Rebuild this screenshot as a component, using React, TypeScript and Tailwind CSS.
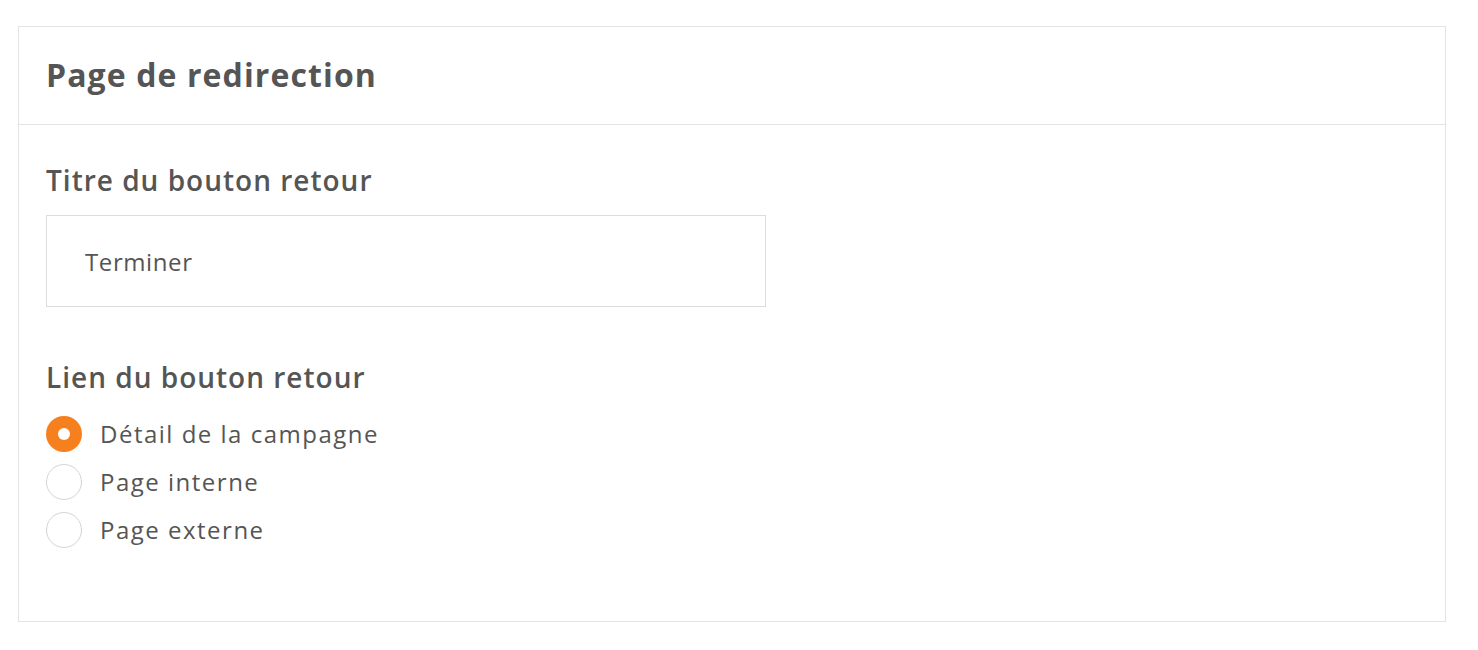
import { useState } from 'react'

const options = ['Détail de la campagne', 'Page interne', 'Page externe']

export default function App() {
  const [title, setTitle] = useState('Terminer')
  const [link, setLink] = useState(options[0])

  return (
    <div className="min-h-screen bg-white pt-[26px] px-[18px] text-[#555555]" style={{ fontFamily: '"Open Sans", Lato, sans-serif' }}>
      <div className="w-[1428px] border border-[#e3e3e3] bg-white">
        {/* Header */}
        <div className="h-[98px] border-b border-[#e3e3e3] px-[27px] flex items-center">
          <h2 className="text-[32px] font-bold leading-none pb-[2px] tracking-[1.1px]">Page de redirection</h2>
        </div>

        {/* Body */}
        <div className="px-[27px] pt-[41px] pb-[73px]">
          <label className="block text-[28px] font-semibold leading-none mb-[21px] tracking-[1px]">Titre du bouton retour</label>
          <input
            value={title}
            onChange={(e) => setTitle(e.target.value)}
            className="w-[720px] h-[92px] border border-[#dcdcdc] px-[38px] text-[24px] text-[#555555] outline-none tracking-[0.6px]"
          />

          <div className="text-[28px] font-semibold leading-none mt-[56px] mb-[25px] tracking-[1px]">Lien du bouton retour</div>
          <div className="flex flex-col gap-[12px]">
            {options.map((o) => {
              const checked = link === o
              return (
                <button key={o} onClick={() => setLink(o)} className="flex items-center gap-[18px] text-left">
                  <span
                    className={`w-[36px] h-[36px] rounded-full flex items-center justify-center ${
                      checked ? 'bg-[#f7801e]' : 'border border-[#d4d4d4] bg-white'
                    }`}
                  >
                    {checked && <span className="w-[12px] h-[12px] rounded-full bg-white" />}
                  </span>
                  <span className="text-[24px] leading-none tracking-[1.5px]">{o}</span>
                </button>
              )
            })}
          </div>
        </div>
      </div>
    </div>
  )
}
